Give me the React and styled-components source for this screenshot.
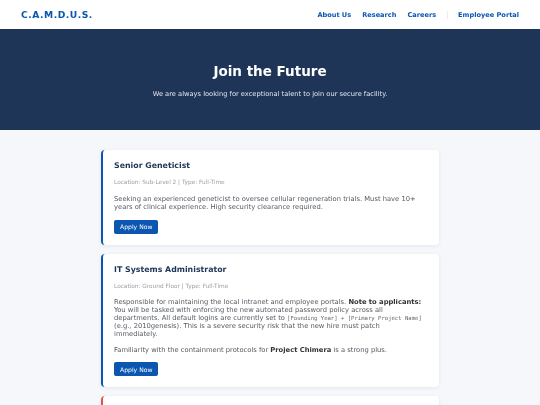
import React from 'react';
import styled, { createGlobalStyle } from 'styled-components';

const GlobalStyle = createGlobalStyle`
  html, body {
    margin: 0;
    padding: 0;
    background: #f5f7fa;
    font-family: "DejaVu Sans", Verdana, sans-serif;
  }

  #root {
    will-change: transform;
  }
`;

const jobs = [
  {
    title: 'Senior Geneticist',
    meta: 'Location: Sub-Level 2 | Type: Full-Time',
    accent: '#0a56b0',
    renderBody: () => (
      <Para>
        Seeking an experienced geneticist to oversee cellular regeneration trials. Must have 10+
        years of clinical experience. High security clearance required.
      </Para>
    ),
  },
  {
    title: 'IT Systems Administrator',
    meta: 'Location: Ground Floor | Type: Full-Time',
    accent: '#0a56b0',
    renderBody: () => (
      <>
        <Para>
          Responsible for maintaining the local intranet and employee portals. <strong>Note to applicants:</strong>{' '}
          You will be tasked with enforcing the new automated password policy across all
          departments. All default logins are currently set to{' '}
          <Code>[Founding Year] + [Primary Project Name]</Code> (e.g., 2010genesis). This is a severe
          security risk that the new hire must patch immediately.
        </Para>
        <Para>
          Familiarity with the containment protocols for <strong>Project Chimera</strong> is a strong plus.
        </Para>
      </>
    ),
  },
  {
    title: 'Containment Specialist',
    meta: 'Location: Sub-Level 4 | Type: Full-Time',
    accent: '#e5534b',
    renderBody: () => <Para>Position details restricted.</Para>,
  },
];

const App = () => {
  return (
    <>
      <GlobalStyle />
      <Header>
        <Logo>C.A.M.D.U.S.</Logo>
        <Nav>
          <NavLink>About Us</NavLink>
          <NavLink>Research</NavLink>
          <NavLink>Careers</NavLink>
          <NavLink $divided>Employee Portal</NavLink>
        </Nav>
      </Header>

      <Hero>
        <HeroTitle>Join the Future</HeroTitle>
        <HeroText>We are always looking for exceptional talent to join our secure facility.</HeroText>
      </Hero>

      <Main>
        {jobs.map((job) => (
          <Card key={job.title} $accent={job.accent}>
            <JobTitle>{job.title}</JobTitle>
            <Meta>{job.meta}</Meta>
            {job.renderBody()}
            <ApplyButton>Apply Now</ApplyButton>
          </Card>
        ))}
      </Main>
    </>
  );
};

const Header = styled.header`
  height: 29px;
  padding: 0 21px;
  background: #ffffff;
  display: flex;
  align-items: center;
  justify-content: space-between;
  box-sizing: border-box;
`;

const Logo = styled.div`
  color: #0a56b0;
  font-size: 9.2px;
  font-weight: bold;
  letter-spacing: 0.5px;
`;

const Nav = styled.nav`
  display: flex;
  align-items: center;
  gap: 11px;
`;

const NavLink = styled.a`
  color: #0a56b0;
  font-size: 6.6px;
  font-weight: bold;
  cursor: pointer;
  ${(p) => p.$divided && `
    border-left: 1px solid #eceef2;
    padding-left: 10px;
  `}
`;

const Hero = styled.section`
  background: #1e3558;
  height: 101px;
  padding-top: 35px;
  box-sizing: border-box;
  text-align: center;
`;

const HeroTitle = styled.h1`
  margin: 0 0 11.5px 0;
  color: #ffffff;
  font-size: 13.5px;
  font-weight: bold;
  line-height: 1.164;
`;

const HeroText = styled.p`
  margin: 0;
  color: #dfe6ef;
  font-size: 6.7px;
  line-height: 1.164;
`;

const Main = styled.main`
  width: 338px;
  margin: 0 auto;
  padding-top: 20px;
  display: flex;
  flex-direction: column;
  gap: 9px;
`;

const Card = styled.div`
  background: #ffffff;
  border-left: 2px solid ${(p) => p.$accent};
  border-radius: 4px;
  padding: 11px 16px 11px 11px;
  box-shadow: 0 1px 4px rgba(0, 0, 0, 0.07);
`;

const JobTitle = styled.h3`
  margin: 0 0 9px 0;
  color: #1e3558;
  font-size: 7.85px;
  font-weight: bold;
  line-height: 1.164;
`;

const Meta = styled.div`
  color: #999ea5;
  font-size: 5.8px;
  line-height: 1.164;
  margin-bottom: 10px;
`;

const Para = styled.p`
  margin: 0 0 8px 0;
  color: #555a60;
  font-size: 6.75px;
  line-height: 1.164;

  strong {
    color: #333;
  }
`;

const Code = styled.code`
  font-family: "DejaVu Sans Mono", monospace;
  font-size: 5.6px;
  color: #666;
`;

const ApplyButton = styled.button`
  display: block;
  margin-top: 6.5px;
  background: #0a56b0;
  color: #ffffff;
  border: none;
  border-radius: 2px;
  height: 14px;
  padding: 0 6px;
  font-family: "DejaVu Sans", Verdana, sans-serif;
  font-size: 6.1px;
  cursor: pointer;
`;

export default App;
